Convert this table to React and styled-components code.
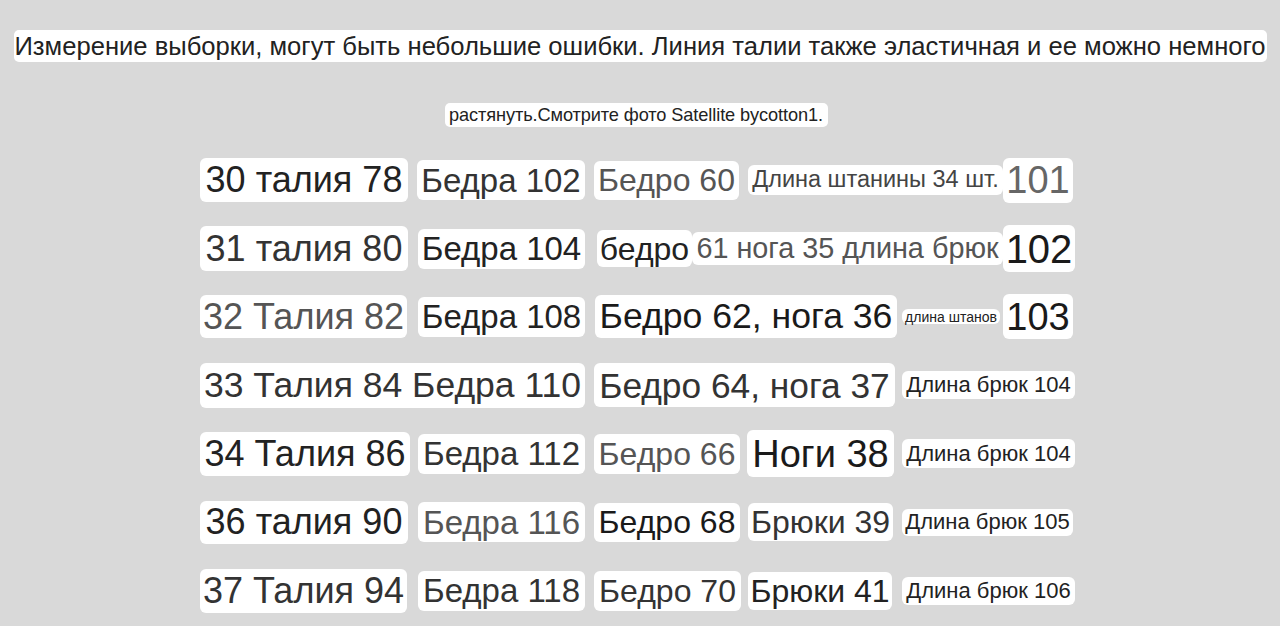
import styled, { createGlobalStyle } from "styled-components";

const GlobalStyle = createGlobalStyle`
  html, body {
    margin: 0;
    padding: 0;
    background: #d9d9d9;
    font-family: "Liberation Sans", Arial, sans-serif;
  }
`;

const Page = styled.div`
  width: 1280px;
  height: 626px;
  overflow: hidden;
  padding-top: 30px;
  box-sizing: border-box;
  display: flex;
  flex-direction: column;
  align-items: center;
`;

const Note = styled.div`
  background: #fff;
  border-radius: 5px;
  color: #222;
  white-space: nowrap;
  box-sizing: border-box;
  display: flex;
  align-items: center;
  justify-content: center;
`;

const NoteLead = styled(Note)`
  width: 1253px;
  height: 32px;
  font-size: 25.6px;
`;

const NoteTail = styled(Note)`
  width: 383px;
  height: 24px;
  margin-top: 41px;
  margin-left: -8px;
  font-size: 18.2px;
  letter-spacing: -0.1px;
`;

const Board = styled.div`
  width: 880px;
  margin-top: 19px;
  display: flex;
  flex-direction: column;
`;

const Row = styled.div`
  height: 68.4px;
  display: flex;
  align-items: center;
`;

const Sticker = styled.span`
  flex: none;
  width: ${(p) => p.$w}px;
  height: ${(p) => p.$h}px;
  margin-left: ${(p) => p.$ml || 0}px;
  background: #fff;
  border-radius: 6px;
  color: ${(p) => p.$c};
  font-size: ${(p) => p.$fs}px;
  white-space: nowrap;
  display: flex;
  align-items: center;
  justify-content: center;
  line-height: 1;
`;

const ROWS = [
  [
    { t: "30 талия 78", w: 208, h: 44, fs: 36, c: "#222" },
    { t: "Бедра 102", ml: 9, w: 168, h: 40, fs: 33, c: "#333" },
    { t: "Бедро 60", ml: 9, w: 145, h: 39, fs: 32, c: "#555" },
    { t: "Длина штанины 34 шт.", ml: 9, w: 255, h: 30, fs: 23.5, c: "#444" },
    { t: "101", w: 70, h: 45, fs: 38, c: "#666" },
  ],
  [
    { t: "31 талия 80", w: 208, h: 45, fs: 36, c: "#333" },
    { t: "Бедра 104", ml: 10, w: 167, h: 40, fs: 33, c: "#222" },
    { t: "бедро", ml: 12, w: 95, h: 37, fs: 32, c: "#222" },
    { t: "61 нога 35 длина брюк", w: 311, h: 33, fs: 28.8, c: "#555" },
    { t: "102", w: 72, h: 47, fs: 40, c: "#1a1a1a" },
  ],
  [
    { t: "32 Талия 82", w: 207, h: 43, fs: 36, c: "#555" },
    { t: "Бедра 108", ml: 11, w: 167, h: 40, fs: 33, c: "#222" },
    { t: "Бедро 62, нога 36", ml: 10, w: 302, h: 43, fs: 35.6, c: "#1a1a1a" },
    { t: "длина штанов", ml: 5, w: 98, h: 15, fs: 14, c: "#222" },
    { t: "103", ml: 3, w: 70, h: 45, fs: 38, c: "#1a1a1a" },
  ],
  [
    { t: "33 Талия 84 Бедра 110", w: 385, h: 45, fs: 35.5, c: "#333" },
    { t: "Бедро 64, нога 37", ml: 9, w: 301, h: 44, fs: 35.3, c: "#333" },
    { t: "Длина брюк 104", ml: 7, w: 173, h: 28, fs: 22, c: "#222" },
  ],
  [
    { t: "34 Талия 86", w: 210, h: 44, fs: 36, c: "#222" },
    { t: "Бедра 112", ml: 8, w: 167, h: 40, fs: 33, c: "#333" },
    { t: "Бедро 66", ml: 9, w: 146, h: 40, fs: 32, c: "#555" },
    { t: "Ноги 38", ml: 7, w: 147, h: 47, fs: 38, c: "#1a1a1a" },
    { t: "Длина брюк 104", ml: 8, w: 173, h: 29, fs: 22, c: "#222" },
  ],
  [
    { t: "36 талия 90", w: 208, h: 43, fs: 36, c: "#222" },
    { t: "Бедра 116", ml: 10, w: 167, h: 40, fs: 33, c: "#555" },
    { t: "Бедро 68", ml: 9, w: 146, h: 39, fs: 32, c: "#1a1a1a" },
    { t: "Брюки 39", ml: 8, w: 145, h: 38, fs: 32, c: "#333" },
    { t: "Длина брюк 105", ml: 9, w: 171, h: 27, fs: 22, c: "#222" },
  ],
  [
    { t: "37 Талия 94", w: 207, h: 44, fs: 36, c: "#333" },
    { t: "Бедра 118", ml: 11, w: 167, h: 40, fs: 33, c: "#333" },
    { t: "Бедро 70", ml: 9, w: 147, h: 40, fs: 32, c: "#333" },
    { t: "Брюки 41", ml: 7, w: 144, h: 38, fs: 32, c: "#222" },
    { t: "Длина брюк 106", ml: 10, w: 173, h: 28, fs: 22, c: "#222" },
  ],
];

export default function App() {
  return (
    <>
      <GlobalStyle />
      <Page>
        <NoteLead>
          Измерение выборки, могут быть небольшие ошибки. Линия талии также
          эластичная и ее можно немного
        </NoteLead>
        <NoteTail>растянуть.Смотрите фото Satellite bycotton1.</NoteTail>
        <Board>
          {ROWS.map((row, i) => (
            <Row key={i}>
              {row.map((cell, j) => (
                <Sticker
                  key={j}
                  $w={cell.w}
                  $h={cell.h}
                  $ml={cell.ml}
                  $fs={cell.fs}
                  $c={cell.c}
                >
                  {cell.t}
                </Sticker>
              ))}
            </Row>
          ))}
        </Board>
      </Page>
    </>
  );
}
